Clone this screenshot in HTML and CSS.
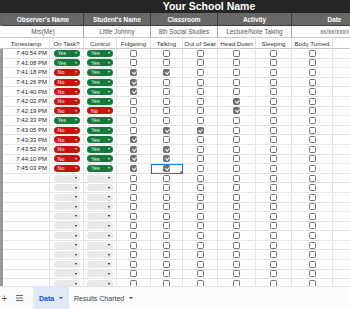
FILE: index.html
```html
<!DOCTYPE html>
<html lang="en">
<head>
<meta charset="UTF-8">
<meta name="viewport" content="width=device-width, initial-scale=1.0">
<title>Behavior Observation</title>
<link rel="stylesheet" href="styles.css">
</head>
<body>
<div class="sheet">
    <div class="title">Your School Name</div>
    <div class="grid" id="grid">
        <div class="gut gut-dark"></div>
        <div class="cell hd span2">Observer's Name</div>
        <div class="cell hd span2">Student's Name</div>
        <div class="cell hd span2">Classroom</div>
        <div class="cell hd span2">Activity</div>
        <div class="cell hd span2">Date</div>
        <div class="cell hd"></div>

        <div class="gut gut-light"></div>
        <div class="cell val span2">Mrs(Me)</div>
        <div class="cell val span2">Little Johnny</div>
        <div class="cell val span2">8th Social Studies</div>
        <div class="cell val span2">Lecture/Note Taking</div>
        <div class="cell val span2">xx/xx/xxxx</div>
        <div class="cell val"></div>

        <div class="gut gut-light"></div>
        <div class="cell lbl">Timestamp</div>
        <div class="cell lbl">On Task?</div>
        <div class="cell lbl">Control</div>
        <div class="cell lbl">Fidgeting</div>
        <div class="cell lbl">Talking</div>
        <div class="cell lbl">Out of Seat</div>
        <div class="cell lbl">Head Down</div>
        <div class="cell lbl">Sleeping</div>
        <div class="cell lbl">Body Turned</div>
        <div class="cell lbl"></div>
        <div class="cell lbl"></div>
    </div>
</div>
<div class="tabs">
    <span class="tab-add">+</span>
    <span class="tab-list">
        <svg width="7" height="6" viewBox="0 0 7 6"><path d="M0 0.5h7M0 3h7M0 5.5h7" stroke="#666" stroke-width="1"/></svg>
    </span>
    <span class="tab active">Data <i class="caret"></i></span>
    <span class="tab">Results Charted <i class="caret"></i></span>
</div>

<script>
// timestamp, on task, control, checked behavior columns (0 = Fidgeting ... 5 = Body Turned)
const observations = [
    ['7:40:54 PM', 'Yes', 'Yes', []],
    ['7:41:08 PM', 'Yes', 'Yes', []],
    ['7:41:18 PM', 'No', 'Yes', [0, 1]],
    ['7:41:26 PM', 'No', 'Yes', [0]],
    ['7:41:40 PM', 'No', 'Yes', [0]],
    ['7:42:02 PM', 'No', 'Yes', [3]],
    ['7:42:19 PM', 'No', 'No', [3]],
    ['7:42:33 PM', 'Yes', 'Yes', []],
    ['7:43:05 PM', 'No', 'Yes', [1, 2]],
    ['7:43:33 PM', 'No', 'Yes', [0]],
    ['7:43:52 PM', 'No', 'Yes', [0, 1]],
    ['7:44:10 PM', 'No', 'Yes', [0, 1]],
    ['7:45:03 PM', 'No', 'Yes', [0, 1]]
];
const totalRows = 25;

function pill(value) {
    if (!value) return '<span class="pill empty"></span>';
    return `<span class="pill ${value === 'Yes' ? 'yes' : 'no'}">${value}</span>`;
}

const grid = document.getElementById('grid');
let html = '';
for (let i = 0; i < totalRows; i++) {
    const row = observations[i] || ['', '', '', []];
    html += '<div class="gut"></div>';
    html += `<div class="cell time">${row[0]}</div>`;
    html += `<div class="cell">${pill(row[1])}</div>`;
    html += `<div class="cell">${pill(row[2])}</div>`;
    for (let c = 0; c < 6; c++) {
        // the last observation's Talking cell is the selected one
        const sel = (i === observations.length - 1 && c === 1) ? ' sel' : '';
        const on = row[3].includes(c) ? ' on' : '';
        html += `<div class="cell${sel}"><span class="cb${on}"></span></div>`;
    }
    html += '<div class="cell"></div><div class="cell"></div>';
}
grid.insertAdjacentHTML('beforeend', html);
</script>
</body>
</html>
```

FILE: styles.css
```css
* {
    box-sizing: border-box;
}
body {
    margin: 0;
    width: 350px;
    height: 309px;
    overflow: hidden;
    font-family: "Liberation Sans", Arial, sans-serif;
    background-color: #fff;
}
.sheet {
    height: 286px;
    overflow: hidden;
}
.title {
    width: 418px;
    height: 13px;
    line-height: 13px;
    background-color: #262626;
    color: #fff;
    font-size: 10.5px;
    font-weight: bold;
    text-align: center;
}
.grid {
    display: grid;
    width: 418px;
    grid-template-columns: 3px 47px 34px 33px 34px 32px 35px 38px 36px 41px 45px 40px;
    grid-template-rows: 13px 12px 11px;
    grid-auto-rows: 9.6px;
}
.gut {
    background-color: #9a9a9a;
}
.gut-dark {
    background-color: #666;
}
.gut-light {
    background-color: #fff;
    border-bottom: 1px solid #ccc;
}
.cell {
    display: flex;
    align-items: center;
    justify-content: center;
    overflow: hidden;
    white-space: nowrap;
    border-right: 1px solid #e4e4e4;
    border-bottom: 1px solid #e4e4e4;
    font-size: 6px;
    color: #222;
}
.span2 {
    grid-column: span 2;
}
.hd {
    background-color: #686868;
    color: #fff;
    font-weight: bold;
    font-size: 6.4px;
    border-right-color: #3c3c3c;
    border-bottom-color: #3c3c3c;
}
.val {
    color: #555;
    font-size: 6.3px;
    border-right-color: #a8a8a8;
    border-bottom-color: #c8c8c8;
}
.lbl {
    color: #333;
    font-size: 6.2px;
    border-bottom-color: #c8c8c8;
}
.time {
    justify-content: flex-end;
    padding-right: 2px;
}

/* dropdown chips */
.pill {
    display: flex;
    align-items: center;
    width: 26px;
    height: 7px;
    padding: 0 3px 0 4px;
    border-radius: 3.5px;
    font-size: 5.4px;
    color: #f1f1f1;
}
.pill::after {
    content: '';
    margin-left: auto;
    border-left: 1.5px solid transparent;
    border-right: 1.5px solid transparent;
    border-top: 2px solid currentColor;
}
.yes {
    background-color: #137a3b;
}
.no {
    background-color: #c4150f;
}
.empty {
    background-color: #e9e9e9;
    color: #222;
}

/* checkboxes */
.cb {
    position: relative;
    width: 7px;
    height: 7px;
    border: 1px solid #717171;
    border-radius: 1.5px;
}
.cb.on {
    background-color: #717171;
}
.cb.on::after {
    content: '';
    position: absolute;
    left: 1.6px;
    top: 0;
    width: 1.6px;
    height: 3.2px;
    border: solid #fff;
    border-width: 0 1px 1px 0;
    transform: rotate(45deg);
}
.sel {
    position: relative;
    outline: 1.5px solid #1a73e8;
    outline-offset: -1px;
}
.sel::after {
    content: '';
    position: absolute;
    right: -2px;
    bottom: -2px;
    width: 4px;
    height: 4px;
    border-radius: 50%;
    background-color: #1a73e8;
}

/* sheet tabs */
.tabs {
    display: flex;
    align-items: center;
    height: 23px;
    border-top: 1px solid #e1e3e6;
    background-color: #f9fbfd;
    font-size: 7px;
    color: #444;
}
.tab-add {
    width: 9px;
    text-align: center;
    font-size: 10px;
    color: #555;
}
.tab-list {
    display: flex;
    justify-content: center;
    width: 24px;
    padding-right: 3px;
}
.tab {
    display: flex;
    align-items: center;
    height: 100%;
    padding: 0 5px;
}
.tab.active {
    width: 36px;
    padding: 0 6px;
    background-color: #e1e9f7;
    color: #0b57d0;
    font-weight: bold;
}
.caret {
    margin-left: 5px;
    border-left: 2px solid transparent;
    border-right: 2px solid transparent;
    border-top: 2.5px solid currentColor;
}
```
